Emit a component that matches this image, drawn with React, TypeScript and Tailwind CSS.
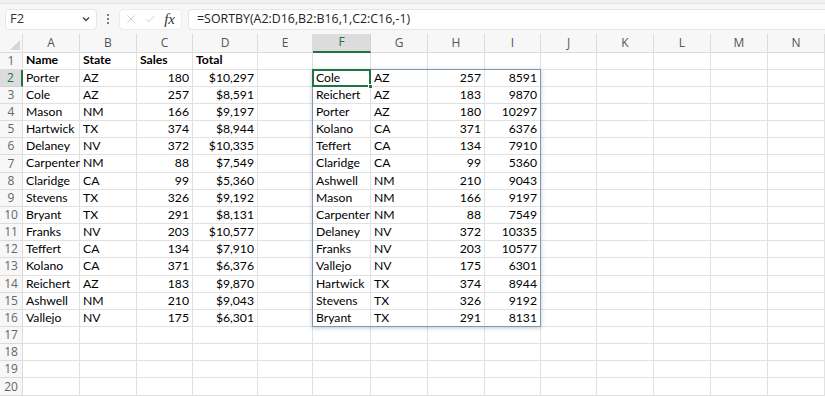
import React from "react";

const cols = ["A", "B", "C", "D", "E", "F", "G", "H", "I", "J", "K", "L", "M", "N"];

const left: [string, string, number, string][] = [
  ["Porter", "AZ", 180, "$10,297"],
  ["Cole", "AZ", 257, "$8,591"],
  ["Mason", "NM", 166, "$9,197"],
  ["Hartwick", "TX", 374, "$8,944"],
  ["Delaney", "NV", 372, "$10,335"],
  ["Carpenter", "NM", 88, "$7,549"],
  ["Claridge", "CA", 99, "$5,360"],
  ["Stevens", "TX", 326, "$9,192"],
  ["Bryant", "TX", 291, "$8,131"],
  ["Franks", "NV", 203, "$10,577"],
  ["Teffert", "CA", 134, "$7,910"],
  ["Kolano", "CA", 371, "$6,376"],
  ["Reichert", "AZ", 183, "$9,870"],
  ["Ashwell", "NM", 210, "$9,043"],
  ["Vallejo", "NV", 175, "$6,301"],
];

const sorted: [string, string, number, number][] = [
  ["Cole", "AZ", 257, 8591],
  ["Reichert", "AZ", 183, 9870],
  ["Porter", "AZ", 180, 10297],
  ["Kolano", "CA", 371, 6376],
  ["Teffert", "CA", 134, 7910],
  ["Claridge", "CA", 99, 5360],
  ["Ashwell", "NM", 210, 9043],
  ["Mason", "NM", 166, 9197],
  ["Carpenter", "NM", 88, 7549],
  ["Delaney", "NV", 372, 10335],
  ["Franks", "NV", 203, 10577],
  ["Vallejo", "NV", 175, 6301],
  ["Hartwick", "TX", 374, 8944],
  ["Stevens", "TX", 326, 9192],
  ["Bryant", "TX", 291, 8131],
];

function cellValue(row: number, col: number): { text: string; right?: boolean; bold?: boolean } {
  if (row === 1) {
    const h = ["Name", "State", "Sales", "Total"];
    if (col < 4) return { text: h[col], bold: true };
    return { text: "" };
  }
  const i = row - 2;
  if (i >= 0 && i < 15) {
    if (col < 4) {
      const v = left[i][col];
      return { text: String(v), right: col >= 2 };
    }
    if (col >= 5 && col <= 8) {
      const v = sorted[i][col - 5];
      return { text: String(v), right: col >= 7 };
    }
  }
  return { text: "" };
}

export default function App() {
  const rows = Array.from({ length: 20 }, (_, i) => i + 1);
  return (
    <div className="w-[825px] h-[397px] overflow-hidden bg-white font-['Lato',sans-serif] text-[12.2px] text-black">
      {/* ribbon edge */}
      <div className="h-[4px] bg-[#f0f0f0] border-b border-[#e3e3e3]" />

      {/* formula bar */}
      <div className="h-[30px] bg-[#f7f7f7] flex items-center gap-[6px] pl-[5px]">
        <div className="w-[92px] h-[21px] bg-white rounded-[4px] border border-[#e6e6e6] flex items-center justify-between pl-[4px] pr-[5px]">
          <span className="font-['Open_Sans',sans-serif] text-[13px] text-[#333]">F2</span>
          <svg width="10" height="10" viewBox="0 0 10 10">
            <path d="M2 3.5 L5 6.5 L8 3.5" stroke="#444" strokeWidth="1.4" fill="none" />
          </svg>
        </div>
        <div className="w-[10px] flex flex-col items-center gap-[2px]">
          <span className="w-[2px] h-[2px] bg-[#555] rounded-full" />
          <span className="w-[2px] h-[2px] bg-[#555] rounded-full" />
          <span className="w-[2px] h-[2px] bg-[#555] rounded-full" />
        </div>
        <div className="w-[63px] h-[21px] bg-white rounded-[4px] border border-[#ececec] flex items-center gap-[9px] px-[6px]">
          <svg width="14" height="14" viewBox="0 0 14 14">
            <path d="M2 2 L12 12 M12 2 L2 12" stroke="#c6c6c6" strokeWidth="1.2" fill="none" />
          </svg>
          <svg width="14" height="14" viewBox="0 0 14 14">
            <path d="M1.5 7.5 L5 11 L12.5 3" stroke="#c6c6c6" strokeWidth="1.2" fill="none" />
          </svg>
          <span className="font-['Liberation_Serif',serif] italic text-[15px] leading-none text-[#333]">fx</span>
        </div>
        <div className="flex-1 h-[21px] bg-white rounded-l-[4px] border border-[#e6e6e6] border-r-0 flex items-center px-[8px]">
          <span className="font-['Open_Sans',sans-serif] text-[12.4px] text-[#222]">=SORTBY(A2:D16,B2:B16,1,C2:C16,-1)</span>
        </div>
      </div>

      {/* grid */}
      <div className="grid grid-cols-[23px_57px_57px_56px_65px_55px_58px_57px_57px_56px_56px_57px_57px_57px_57px] grid-rows-[18.5px_repeat(20,17.17px)]">
        {/* corner */}
        <div className="col-start-1 row-start-1 bg-[#f7f7f7] border-r border-b border-[#dcdcdc] flex items-end justify-end p-[2px]">
          <svg width="10" height="10" viewBox="0 0 10 10">
            <path d="M10 0 L10 10 L0 10 Z" fill="#d6d6d6" />
          </svg>
        </div>
        {cols.map((c, ci) => (
          <div
            key={c}
            style={{ gridColumnStart: ci + 2, gridRowStart: 1 }}
            className={
              ci === 5
                ? "bg-[#dcdcdc] border-r border-[#d0d0d0] border-b-2 border-b-[#217346] flex items-center justify-center text-[#217346] font-['Open_Sans',sans-serif] text-[12px]"
                : "bg-[#f7f7f7] border-r border-b border-[#dcdcdc] flex items-center justify-center text-[#555] font-['Open_Sans',sans-serif] text-[12px]"
            }
          >
            {c}
          </div>
        ))}
        {rows.map((r) => (
          <React.Fragment key={r}>
            <div
              style={{ gridColumnStart: 1, gridRowStart: r + 1 }}
              className={
                r === 2
                  ? "bg-[#dcdcdc] border-b border-[#d0d0d0] border-r-2 border-r-[#217346] flex items-center justify-center text-[#217346] font-['Open_Sans',sans-serif] text-[12px]"
                  : "bg-[#f7f7f7] border-r border-b border-[#dcdcdc] flex items-center justify-center text-[#666] font-['Open_Sans',sans-serif] text-[12px]"
              }
            >
              {r}
            </div>
            {cols.map((c, ci) => {
              const v = cellValue(r, ci);
              return (
                <div
                  key={c + r}
                  style={{ gridColumnStart: ci + 2, gridRowStart: r + 1 }}
                  className={
                    "border-r border-b border-[#e1e1e1] flex items-center px-[3px] whitespace-nowrap overflow-visible leading-none " +
                    (v.right ? "justify-end " : "justify-start ") +
                    (v.bold ? "font-bold" : "")
                  }
                >
                  {v.text}
                </div>
              );
            })}
          </React.Fragment>
        ))}
        {/* spill range outline F2:I16 */}
        <div className="col-start-7 col-end-11 row-start-3 row-end-18 border border-[#8597ad] shadow-[0_1px_4px_rgba(70,90,120,0.35)] pointer-events-none -ml-px -mt-px" />
        {/* active cell F2 */}
        <div className="col-start-7 col-end-8 row-start-3 row-end-4 border-2 border-[#217346] -ml-px -mt-px relative pointer-events-none">
          <span className="absolute -right-[4px] -bottom-[4px] w-[5px] h-[5px] bg-[#217346] border border-white" />
        </div>
      </div>
    </div>
  );
}
